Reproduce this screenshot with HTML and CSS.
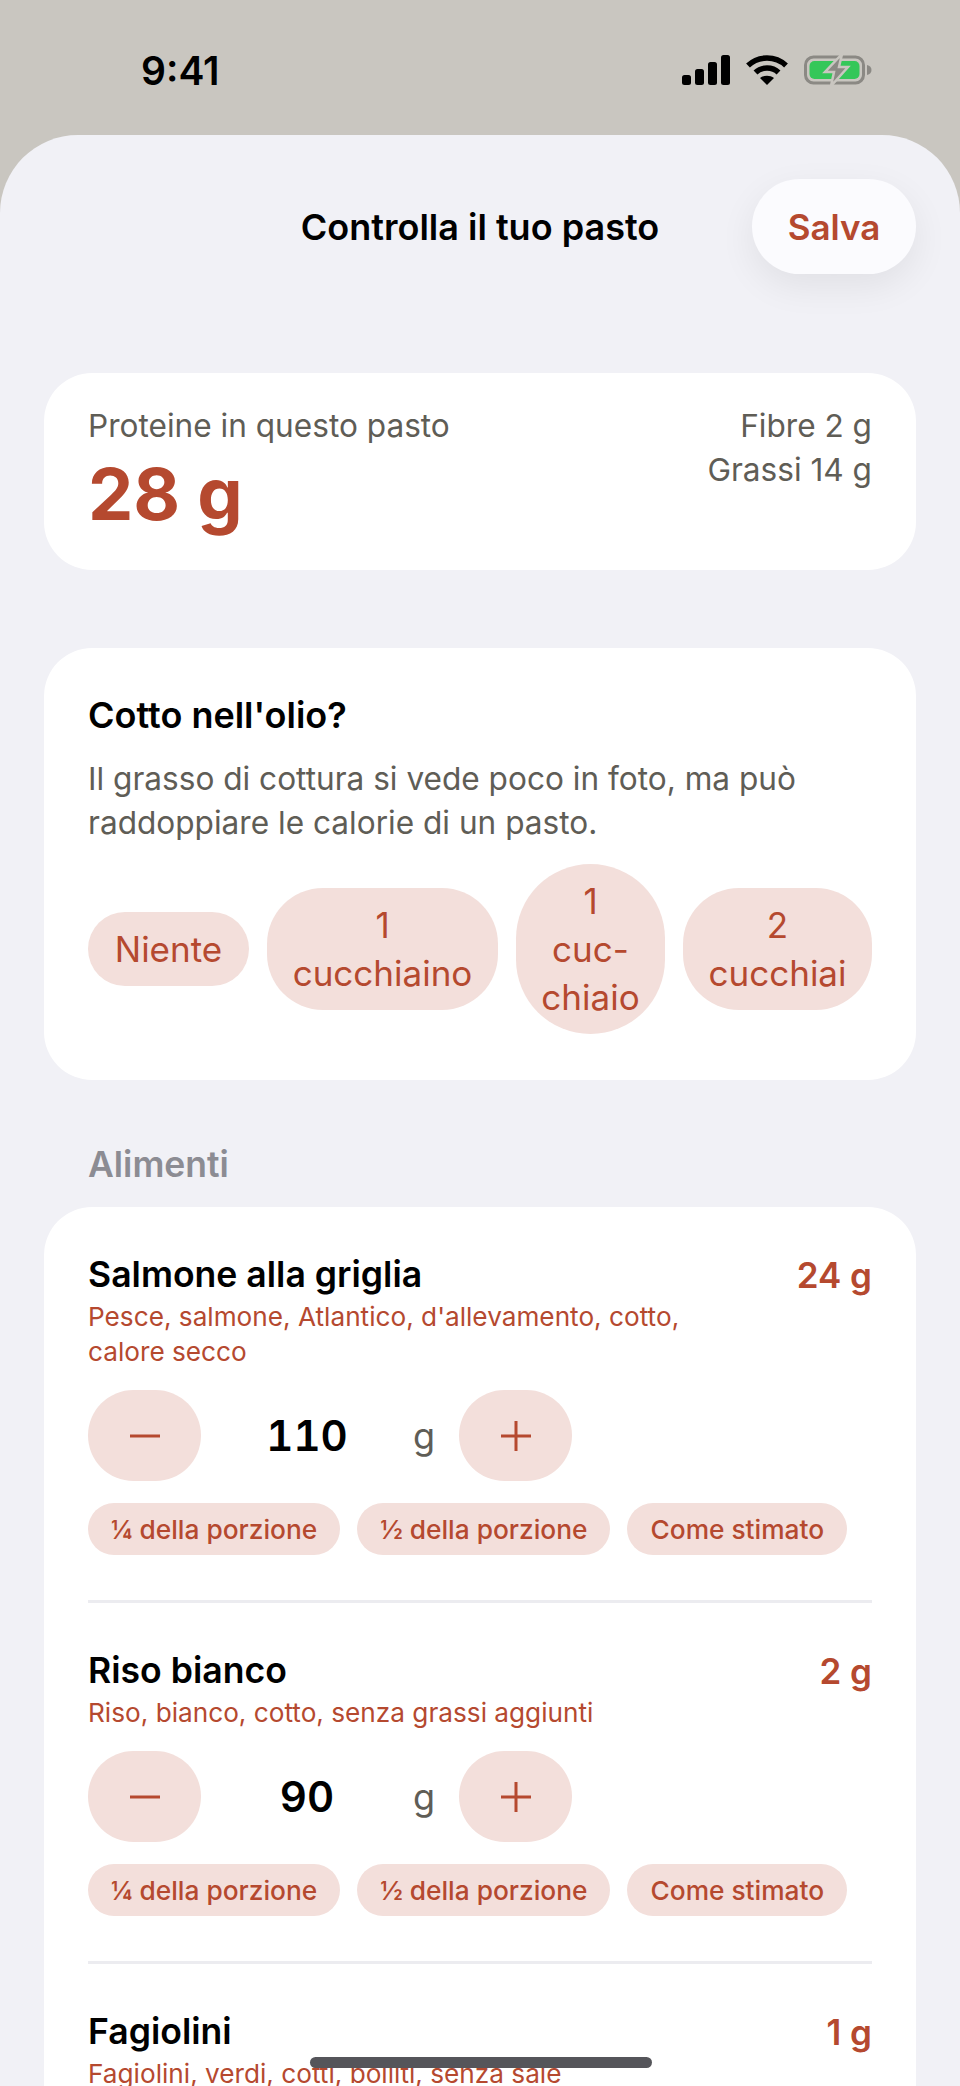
FILE: index.html
```html
<!DOCTYPE html>
<html lang="en">
<head>
    <meta charset="UTF-8">
    <meta name="viewport" content="width=device-width, initial-scale=1.0">
    <title>Controlla il tuo pasto</title>
    <link rel="stylesheet" href="styles.css">
</head>
<body>
    <div class="status-bar">
        <span class="clock">9:41</span>
        <div class="status-icons">
            <svg class="icon-signal" width="48" height="30" viewBox="0 0 48 30">
                <rect x="0" y="20" width="9" height="10" rx="2.5"/>
                <rect x="13" y="14" width="9" height="16" rx="2.5"/>
                <rect x="26" y="7" width="9" height="23" rx="2.5"/>
                <rect x="39" y="0" width="9" height="30" rx="2.5"/>
            </svg>
            <svg class="icon-wifi" width="42" height="30" viewBox="0 0 42 30">
                <path d="M2 10.500 C12.500 0.500 29.500 0.500 40 10.500" fill="none" stroke="#000" stroke-width="5.500"/>
                <path d="M9.500 17.500 C15.500 11.500 26.500 11.500 32.500 17.500" fill="none" stroke="#000" stroke-width="5.500"/>
                <path d="M14 23 C18 20 24 20 28 23 L21 30 Z"/>
            </svg>
            <svg class="icon-battery" width="68" height="32" viewBox="0 0 68 32">
                <rect x="1.500" y="3" width="58" height="26" rx="8" fill="none" stroke="#8b8984" stroke-width="3"/>
                <path d="M63 11 C66 11.500 67.500 13.500 67.500 16 C67.500 18.500 66 20.500 63 21 Z" fill="#8b8984"/>
                <rect x="5.500" y="7" width="50" height="18" rx="5" fill="#34c759"/>
                <path d="M38 0 L21 18 H30 L27 32 L44 13 H35 Z" fill="#8b8984" stroke="#c9c6c0" stroke-width="2.500"/>
            </svg>
        </div>
    </div>

    <div class="sheet">
        <div class="sheet-header">
            <h1>Controlla il tuo pasto</h1>
            <button type="button" class="save-btn">Salva</button>
        </div>

        <div class="card summary">
            <div>
                <div class="muted">Proteine in questo pasto</div>
                <div class="protein-total">28 g</div>
            </div>
            <div class="summary-side muted">
                <div>Fibre 2 g</div>
                <div>Grassi 14 g</div>
            </div>
        </div>

        <div class="card oil">
            <h2>Cotto nell'olio?</h2>
            <p class="muted">Il grasso di cottura si vede poco in foto, ma può raddoppiare le calorie di un pasto.</p>
            <div class="oil-options">
                <button type="button" class="oil-btn oil-none">Niente</button>
                <button type="button" class="oil-btn oil-tsp">1 cucchiaino</button>
                <button type="button" class="oil-btn oil-tbsp">1<br>cuc-<br>chiaio</button>
                <button type="button" class="oil-btn oil-two">2 cucchiai</button>
            </div>
        </div>

        <div class="section-label">Alimenti</div>

        <div class="card foods">
            <div class="food">
                <div class="food-top">
                    <h3>Salmone alla griglia</h3>
                    <span class="food-protein">24 g</span>
                </div>
                <div class="food-match">Pesce, salmone, Atlantico, d'allevamento, cotto, calore secco</div>
                <div class="stepper">
                    <button type="button" class="step-btn">
                        <svg width="30" height="30" viewBox="0 0 30 30"><path d="M0 15H30"/></svg>
                    </button>
                    <span class="amount">110</span>
                    <span class="unit">g</span>
                    <button type="button" class="step-btn">
                        <svg width="30" height="30" viewBox="0 0 30 30"><path d="M0 15H30M15 0V30"/></svg>
                    </button>
                </div>
                <div class="portions">
                    <button type="button" class="portion-btn">¼ della porzione</button>
                    <button type="button" class="portion-btn">½ della porzione</button>
                    <button type="button" class="portion-btn">Come stimato</button>
                </div>
            </div>

            <div class="food">
                <div class="food-top">
                    <h3>Riso bianco</h3>
                    <span class="food-protein">2 g</span>
                </div>
                <div class="food-match">Riso, bianco, cotto, senza grassi aggiunti</div>
                <div class="stepper">
                    <button type="button" class="step-btn">
                        <svg width="30" height="30" viewBox="0 0 30 30"><path d="M0 15H30"/></svg>
                    </button>
                    <span class="amount">90</span>
                    <span class="unit">g</span>
                    <button type="button" class="step-btn">
                        <svg width="30" height="30" viewBox="0 0 30 30"><path d="M0 15H30M15 0V30"/></svg>
                    </button>
                </div>
                <div class="portions">
                    <button type="button" class="portion-btn">¼ della porzione</button>
                    <button type="button" class="portion-btn">½ della porzione</button>
                    <button type="button" class="portion-btn">Come stimato</button>
                </div>
            </div>

            <div class="food">
                <div class="food-top">
                    <h3>Fagiolini</h3>
                    <span class="food-protein">1 g</span>
                </div>
                <div class="food-match">Fagiolini, verdi, cotti, bolliti, senza sale</div>
            </div>
        </div>
    </div>

    <div class="home-indicator"></div>
</body>
</html>
```

FILE: styles.css
```css
html,
body {
    height: 100%;
}

body {
    margin: 0;
    position: relative;
    overflow: hidden;
    background: #c9c6c0;
    font-family: Inter, "Liberation Sans", sans-serif;
    color: #000000;
}

button {
    border: none;
    padding: 0;
    font-family: inherit;
    background: #f3dfdb;
    color: #b5492f;
}

h1,
h2,
h3,
p {
    margin: 0;
}

.status-bar {
    height: 135px;
    padding: 0 88px 0 141px;
    box-sizing: border-box;
    display: flex;
    justify-content: space-between;
    align-items: flex-start;
}

.clock {
    margin-top: 48px;
    font-size: 39px;
    line-height: 46px;
    font-weight: 600;
}

.status-icons {
    margin-top: 54px;
    display: flex;
    align-items: center;
    gap: 16px;
}

.sheet {
    height: 1951px;
    padding: 44px 44px 0;
    box-sizing: border-box;
    overflow: hidden;
    background: #f1f1f6;
    border-radius: 78px 78px 0 0;
}

.sheet-header {
    position: relative;
    height: 95px;
    margin-bottom: 99px;
    display: flex;
    align-items: center;
    justify-content: center;
}

.sheet-header h1 {
    font-size: 36px;
    font-weight: 600;
}

.save-btn {
    position: absolute;
    right: 0;
    top: 0;
    width: 164px;
    height: 95px;
    border-radius: 48px;
    background: #fbfbfe;
    font-size: 35px;
    font-weight: 600;
    box-shadow: 0 12px 36px rgba(0, 0, 0, 0.07);
}

.card {
    background: #ffffff;
    border-radius: 48px;
    padding: 0 44px;
}

.muted {
    color: #5f5d56;
    font-size: 31.600px;
    line-height: 44px;
}

.summary {
    height: 197px;
    padding-top: 31px;
    box-sizing: border-box;
    margin-bottom: 78px;
    display: flex;
    justify-content: space-between;
}

.protein-total {
    margin-top: 6px;
    font-size: 72px;
    line-height: 80px;
    font-weight: 700;
    color: #b5492f;
}

.summary-side {
    text-align: right;
}

.oil {
    height: 432px;
    padding-top: 46px;
    box-sizing: border-box;
}

.oil h2 {
    font-size: 36px;
    line-height: 42px;
    font-weight: 600;
}

.oil p {
    margin-top: 21px;
}

.oil-options {
    margin-top: 19px;
    display: flex;
    align-items: center;
    gap: 18px;
}

.oil-btn {
    flex: none;
    font-size: 35px;
    line-height: 48px;
    padding: 13px 20px;
    border-radius: 56px;
    box-sizing: border-box;
}

.oil-none {
    width: 161px;
    border-radius: 37px;
}

.oil-tsp {
    width: 231px;
}

.oil-tbsp {
    width: 149px;
    border-radius: 75px;
}

.oil-two {
    width: 189px;
}

.section-label {
    margin: 64px 44px 21px;
    font-size: 35.500px;
    line-height: 42px;
    font-weight: 600;
    color: #8c8c93;
}

.food {
    padding: 48px 0 45px;
    border-bottom: 3px solid #ececf0;
}

.food:last-child {
    border-bottom: none;
}

.food-top {
    display: flex;
    justify-content: space-between;
    align-items: center;
}

.food-top h3 {
    font-size: 35.600px;
    line-height: 40px;
    font-weight: 600;
}

.food-protein {
    font-size: 35px;
    line-height: 40px;
    font-weight: 600;
    color: #b5492f;
}

.food-match {
    width: 640px;
    margin-top: 4px;
    font-size: 26.200px;
    line-height: 35px;
    color: #b5492f;
}

.stepper {
    margin-top: 21px;
    display: flex;
    align-items: center;
    gap: 18px;
}

.step-btn {
    width: 113px;
    height: 91px;
    border-radius: 46px;
    display: flex;
    align-items: center;
    justify-content: center;
}

.step-btn svg {
    fill: none;
    stroke: #b5492f;
    stroke-width: 3;
}

.amount {
    width: 176px;
    text-align: center;
    font-size: 42px;
    font-weight: 600;
    font-variant-numeric: tabular-nums;
}

.unit {
    width: 28px;
    font-size: 36px;
    color: #5f5d56;
}

.portions {
    margin-top: 22px;
    display: flex;
    gap: 17px;
}

.portion-btn {
    height: 52px;
    padding: 0 23px;
    border-radius: 26px;
    font-size: 26.300px;
    font-weight: 500;
}

.home-indicator {
    position: absolute;
    left: 310px;
    top: 2057px;
    width: 342px;
    height: 11px;
    border-radius: 6px;
    background: #55555a;
}
```
